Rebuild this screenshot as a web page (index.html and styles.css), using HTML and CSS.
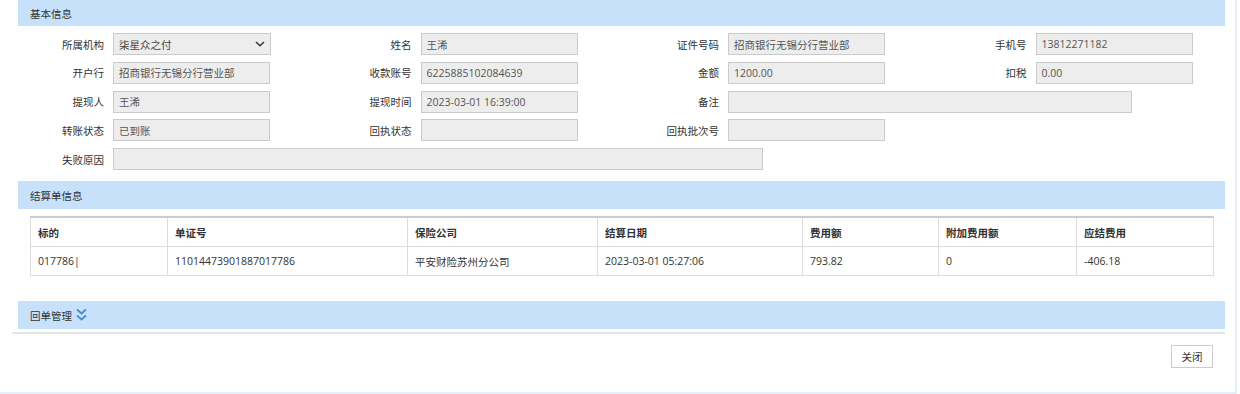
FILE: index.html
```html
<!DOCTYPE html>
<html lang="zh-CN">
	<head>
		<meta charset="UTF-8" />
		<meta name="viewport" content="width=device-width, initial-scale=1.0" />
		<title>提现详情</title>
		<link rel="stylesheet" href="styles.css">
	</head>
	<body>
		<div class="page">
			<div class="sec-head first">基本信息</div>

			<div class="form">
				<label class="lbl">所属机构</label>
				<div class="fld">
					<div class="select">
						<span>柒星众之付</span>
						<svg width="10" height="6" viewBox="0 0 10 6"><path d="M1 1l4 3.8L9 1" fill="none" stroke="#333" stroke-width="1.5"/></svg>
					</div>
				</div>
				<label class="lbl">姓名</label>
				<div class="fld"><div class="inp">王浠</div></div>
				<label class="lbl">证件号码</label>
				<div class="fld"><div class="inp">招商银行无锡分行营业部</div></div>
				<label class="lbl">手机号</label>
				<div class="fld"><div class="inp">13812271182</div></div>

				<label class="lbl">开户行</label>
				<div class="fld"><div class="inp">招商银行无锡分行营业部</div></div>
				<label class="lbl">收款账号</label>
				<div class="fld"><div class="inp">6225885102084639</div></div>
				<label class="lbl">金额</label>
				<div class="fld"><div class="inp">1200.00</div></div>
				<label class="lbl">扣税</label>
				<div class="fld"><div class="inp">0.00</div></div>

				<label class="lbl">提现人</label>
				<div class="fld"><div class="inp">王浠</div></div>
				<label class="lbl">提现时间</label>
				<div class="fld"><div class="inp">2023-03-01 16:39:00</div></div>
				<label class="lbl">备注</label>
				<div class="fld span3"><div class="inp remark"></div></div>

				<label class="lbl">转账状态</label>
				<div class="fld"><div class="inp">已到账</div></div>
				<label class="lbl">回执状态</label>
				<div class="fld"><div class="inp"></div></div>
				<label class="lbl">回执批次号</label>
				<div class="fld"><div class="inp"></div></div>
				<div class="fld empty"></div>
				<div class="fld empty"></div>

				<label class="lbl">失败原因</label>
				<div class="fld span4"><div class="inp reason"></div></div>
			</div>

			<div class="sec-head">结算单信息</div>

			<table class="grid">
				<colgroup>
					<col style="width: 137px" />
					<col style="width: 240px" />
					<col style="width: 190px" />
					<col style="width: 205px" />
					<col style="width: 136px" />
					<col style="width: 138px" />
					<col style="width: 137px" />
				</colgroup>
				<thead>
					<tr>
						<th>标的</th>
						<th>单证号</th>
						<th>保险公司</th>
						<th>结算日期</th>
						<th>费用额</th>
						<th>附加费用额</th>
						<th>应结费用</th>
					</tr>
				</thead>
				<tbody>
					<tr>
						<td>017786|</td>
						<td>11014473901887017786</td>
						<td>平安财险苏州分公司</td>
						<td>2023-03-01 05:27:06</td>
						<td>793.82</td>
						<td>0</td>
						<td>-406.18</td>
					</tr>
				</tbody>
			</table>

			<div class="sec-head third">
				回单管理
				<svg class="dbl" width="11" height="14" viewBox="0 0 11 14"><path d="M1 1.5l4.5 4L10 1.5M1 7.5l4.5 4L10 7.5" fill="none" stroke="#4a8ad4" stroke-width="1.7"/></svg>
			</div>

			<div class="divider"></div>

			<div class="actions">
				<button class="btn">关闭</button>
			</div>
		</div>
	</body>
</html>
```

FILE: styles.css
```css
body {
	margin: 0;
	background-color: white;
	font-family: "Open Sans", "Noto Sans CJK SC", sans-serif;
	font-size: 10.5px;
	color: #333;
}

.page {
	width: 1235px;
	height: 392px;
	border-right: 2px solid #e6eef9;
	border-bottom: 2px solid #e6eef9;
	overflow: hidden;
}

.sec-head {
	display: flex;
	align-items: center;
	height: 28px;
	margin-left: 18px;
	width: 1195px;
	padding-left: 12px;
	background-color: #c8e1fb;
	color: #333;
}

.sec-head.first {
	height: 26px;
}

.sec-head.third {
	margin-top: 25px;
}

.dbl {
	margin-left: 4px;
}

.form {
	display: grid;
	grid-template-columns: repeat(4, 104px 203.5px);
	grid-auto-rows: 22px;
	row-gap: 6.75px;
	margin-top: 7px;
	margin-bottom: 11px;
}

.lbl {
	display: flex;
	align-items: center;
	justify-content: flex-end;
	color: #333;
}

.fld {
	padding-left: 9px;
}

.span3 {
	grid-column: span 3;
}

.span4 {
	grid-column: span 5;
}

.inp,
.select {
	box-sizing: border-box;
	display: flex;
	align-items: center;
	width: 157px;
	height: 22px;
	padding: 0 5px;
	background-color: #ededed;
	border: 1px solid #cbcbcb;
	color: #555;
	white-space: nowrap;
}

.select {
	width: 158px;
	justify-content: space-between;
	padding-right: 5px;
	color: #444;
}

.inp.remark {
	width: 404px;
}

.inp.reason {
	width: 650px;
}

.grid {
	border-collapse: collapse;
	margin: 7px 0 0 30px;
	width: 1183px;
	table-layout: fixed;
	border: 1px solid #dcdcdc;
	border-top: 2px solid #cccccc;
}

.grid th,
.grid td {
	border: 1px solid #dcdcdc;
	padding: 0 7px;
	text-align: left;
	white-space: nowrap;
	color: #333;
}

.grid th {
	height: 28px;
	font-weight: bold;
}

.grid td {
	height: 28px;
}

.grid thead tr {
	border-top: 2px solid #cccccc;
}

.divider {
	margin: 3px 0 0 12px;
	width: 1213px;
	height: 2px;
	background-color: #e5e5e5;
}

.actions {
	display: flex;
	justify-content: flex-end;
	width: 1213px;
	padding-top: 11px;
}

.btn {
	width: 42px;
	height: 23px;
	padding: 0;
	background-color: white;
	border: 1px solid #cccccc;
	font-family: "Open Sans", "Noto Sans CJK SC", sans-serif;
	font-size: 10.5px;
	color: #333;
	cursor: pointer;
}
```
